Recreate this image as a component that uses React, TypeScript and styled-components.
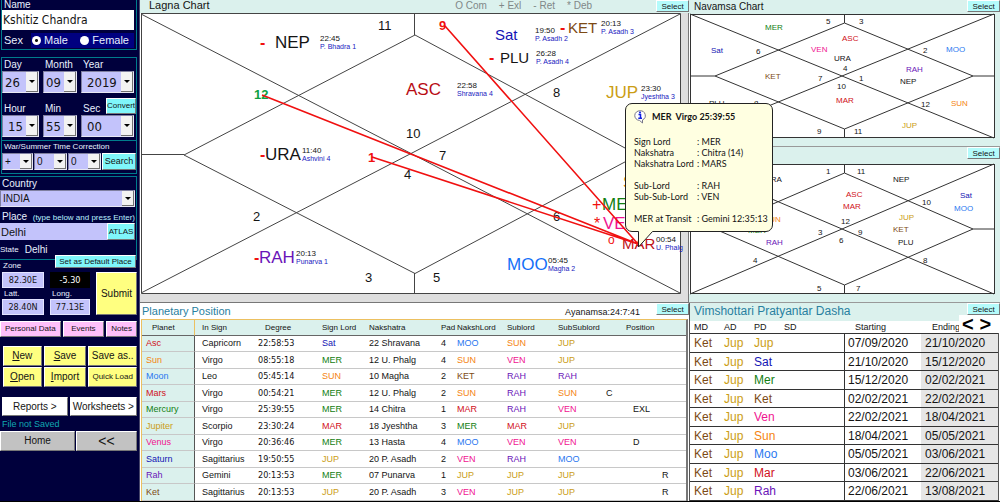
import React from "react";
import styled, { createGlobalStyle, css } from "styled-components";

const colors = {
  navy: "#00003c",
  teal: "#007c8c",
  mint: "#dbf1ed",
  lilac: "#c3c3fb",
  cyan: "#7ff6fa",
  black: "#141414",
  Sat: "#1414b4",
  Mer: "#128012",
  Sun: "#f58410",
  Moo: "#2a78f0",
  Mar: "#d01020",
  Jup: "#cb9d14",
  Ven: "#f01490",
  Rah: "#6a14b8",
  Ket: "#7d4a14",
};

const sans = `"Liberation Sans", Arial, sans-serif`;
const tahoma = `"DejaVu Sans Condensed", "DejaVu Sans", sans-serif`;

const planetColor = (name: string): string => {
  const key = name.slice(0, 1).toUpperCase() + name.slice(1, 3).toLowerCase();
  if (key === "Asc") return colors.Mar;
  return (colors as Record<string, string>)[key] ?? colors.black;
};

const GlobalStyle = createGlobalStyle`
  * { box-sizing: border-box; }
  body { margin: 0; background: #000; font-family: ${sans}; color: ${colors.black}; }
  button, input, select { font-family: inherit; color: inherit; margin: 0; border-radius: 0; }
`;

const Page = styled.div`
  display: grid;
  grid-template-columns: 140px minmax(0, 549fr) minmax(0, 311fr);
  border-bottom: 1px solid #000;
  overflow: hidden;
`;

/* ---------- sidebar ---------- */

const Sidebar = styled.aside`
  display: flex;
  flex-direction: column;
  padding-right: 2px;
  background: ${colors.navy};
  border-right: 1px solid #46466a;
  color: #e8f0ff;
`;

const Box = styled.section<{ $open?: boolean }>`
  display: flex;
  flex-direction: column;
  margin-left: 1px;
  border: 1px solid ${colors.teal};
  ${(p) => p.$open && css`border-left: 0; margin-left: 0;`}
`;

const NameBox = styled(Box)`
  border-top: 0;
  margin-bottom: 7px;
`;

const Label = styled.label<{ $size?: number; $height?: number }>`
  font-size: ${(p) => p.$size ?? 10}px;
  line-height: ${(p) => p.$height ?? 12}px;
  padding-left: 2px;
  white-space: nowrap;
`;

const NameInput = styled.input`
  height: 20px;
  margin-right: 2px;
  padding: 0 1px;
  border: 0;
  background: #fff;
  color: ${colors.black};
  font: 12px ${tahoma};
  min-width: 0;
`;

const SexRow = styled.div`
  display: flex;
  align-items: center;
  height: 16px;
  margin: 2px 2px 1px 2px;
  font-size: 11px;
`;

const RadioGroup = styled.div`
  display: flex;
  flex: 1;
  align-items: center;
  justify-content: space-between;
  margin-left: 8px;
  padding: 0 5px 0 1px;
  background: #000080;
`;

const RadioLabel = styled.label`
  display: flex;
  align-items: center;
  gap: 3px;
  line-height: 15px;
`;

const Radio = styled.input`
  appearance: none;
  width: 9px;
  height: 9px;
  border-radius: 50%;
  background: #fff;
  &:checked { background: radial-gradient(circle, #111 0 1px, #fff 2px); }
`;

const DateGrid = styled.div`
  display: grid;
  grid-template-columns: 37px 34px minmax(0, 1fr);
  column-gap: 4px;
  padding-right: 2px;
  align-items: end;
`;

const SecHead = styled.div`
  display: flex;
  justify-content: space-between;
  align-items: flex-end;
  height: 22px;
  margin-right: -2px;
`;

const Picker = styled.div<{ $height: number }>`
  display: grid;
  grid-template-columns: minmax(0, 1fr);
  height: ${(p) => p.$height}px;
`;

const Select = styled.select<{ $size: number; $indent: number }>`
  grid-area: 1 / 1;
  appearance: none;
  height: 100%;
  padding: 0 0 0 ${(p) => p.$indent}px;
  border: 1px solid #e8e8f4;
  border-top-color: #8080a0;
  border-left-color: #8080a0;
  background: ${colors.lilac};
  color: ${colors.black};
  font: ${(p) => p.$size}px ${(p) => (p.$size > 12 ? tahoma : sans)};
`;

const Arrow = styled.span`
  grid-area: 1 / 1;
  justify-self: end;
  align-self: center;
  display: grid;
  place-items: center;
  width: 12px;
  height: calc(100% - 2px);
  margin-right: 1px;
  background: #f2f2f2;
  border-right: 1px solid #707070;
  border-bottom: 1px solid #707070;
  pointer-events: none;
  &::after {
    content: "";
    border: 3px solid transparent;
    border-top-color: #000;
    border-bottom: 0;
  }
`;

const bevel = css`
  padding: 0;
  border: 1px solid #fff;
  border-right-color: #777;
  border-bottom-color: #777;
  color: ${colors.black};
  white-space: nowrap;
  cursor: pointer;
`;

type ButtonProps = { $bg?: string; $size?: number; $height?: number };

const Button = styled.button<ButtonProps>`
  ${bevel}
  min-width: 0;
  height: ${(p) => (p.$height ? `${p.$height}px` : "auto")};
  background: ${(p) => p.$bg ?? colors.cyan};
  font-size: ${(p) => p.$size ?? 9}px;
  line-height: 1;
`;

const ConvertButton = styled(Button)`
  width: 30px;
  margin-bottom: 1px;
`;

const Correction = styled.div`
  display: grid;
  grid-template-columns: 31px 33px 33px 34px;
  column-gap: 1px;
  padding-bottom: 3px;
`;

const Divider = styled.hr`
  width: 100%;
  margin: 3px 0 0;
  border: 0;
  border-top: 1px solid ${colors.teal};
`;

const PlaceBox = styled(Box)`
  margin-top: 2px;
  padding-right: 1px;
`;

const PlaceHead = styled.div`
  display: flex;
  align-items: center;
  justify-content: space-between;
  height: 16px;
  padding-top: 4px;
`;

const Hint = styled.span`
  color: #b8f0ff;
  font-size: 8px;
  white-space: nowrap;
`;

const PlaceRow = styled.div`
  display: grid;
  grid-template-columns: minmax(0, 1fr) 28px;
`;

const PlaceInput = styled.input`
  height: 17px;
  min-width: 0;
  padding: 0 1px;
  border: 0;
  background: ${colors.lilac};
  color: ${colors.black};
  font-size: 11px;
`;

const StateRow = styled.div`
  display: flex;
  align-items: center;
  gap: 6px;
  height: 19px;
  font-size: 8px;
  b { font-weight: normal; font-size: 10px; }
`;

const ZoneRow = styled.div`
  display: flex;
  justify-content: space-between;
  height: 12px;
  padding-left: 1px;
`;

const DefaultButton = styled(Button)`
  width: 81px;
  margin-top: -5px;
  margin-right: 1px;
  position: relative;
`;

const CoordGrid = styled.div`
  display: grid;
  grid-template-columns: 42px 40px minmax(0, 1fr);
  grid-template-rows: 16px 11px 16px;
  column-gap: 6px;
  padding-left: 2px;
`;

const CoordInput = styled.input<{ $dark?: boolean }>`
  min-width: 0;
  width: 100%;
  padding: 0;
  border: 1px solid ${(p) => (p.$dark ? "#000" : "#e4e4ff")};
  background: ${(p) => (p.$dark ? "#000" : colors.lilac)};
  color: ${(p) => (p.$dark ? "#fff" : colors.black)};
  font: 9px ${tahoma};
  text-align: center;
`;

const SubmitButton = styled(Button)`
  grid-column: 3;
  grid-row: 1 / 4;
`;

const ButtonGrid = styled.div<{ $cols: string; $top: number; $left?: number; $gap?: number }>`
  display: grid;
  grid-template-columns: ${(p) => p.$cols};
  gap: 1px ${(p) => p.$gap ?? 2}px;
  margin-top: ${(p) => p.$top}px;
  padding-left: ${(p) => p.$left ?? 0}px;
`;

const FileStatus = styled.p`
  margin: 3px 0 0;
  padding-left: 2px;
  color: #10a8b0;
  font-size: 9px;
  line-height: 11px;
`;

/* ---------- panels ---------- */

const Column = styled.main`
  display: flex;
  flex-direction: column;
  min-width: 0;
  background: #fff;
`;

const PanelHead = styled.header<{ $height: number; $plain?: boolean; $indent: number }>`
  display: flex;
  align-items: flex-start;
  justify-content: space-between;
  height: ${(p) => p.$height}px;
  padding-left: ${(p) => p.$indent}px;
  background: ${(p) => (p.$plain ? "#fff" : colors.mint)};
`;

const Title = styled.h2<{ $size: number; $height: number; $blue?: boolean }>`
  margin: 0;
  font-size: ${(p) => p.$size}px;
  line-height: ${(p) => p.$height}px;
  font-weight: normal;
  color: ${(p) => (p.$blue ? "#2880a0" : colors.black)};
  white-space: nowrap;
`;

const Legend = styled.div`
  display: flex;
  flex: 1;
  justify-content: flex-end;
  gap: 12px;
  margin-right: 64px;
  font-size: 10px;
  line-height: 11px;
  color: #808888;
`;

const SelectButton = styled.button<{ $width: number }>`
  ${bevel}
  width: ${(p) => p.$width}px;
  height: 12px;
  background: #b4fbfb;
  font-size: 8px;
  line-height: 9px;
`;

const LagnaBody = styled.div`
  position: relative;
  padding: 0 8px 8px 0;
  background: #dedede;
  border-right: 1px solid #777;
  border-bottom: 1px solid #777;
`;

const SmallBody = styled.div`
  padding: 0 5px 8px 0;
  background: ${colors.mint};
  border-bottom: 1px solid #999;
`;

const Chart = styled.svg`
  display: block;
  width: 100%;
  overflow: visible;
  background: #fff;
`;

const Ayanamsa = styled.p`
  flex: 1;
  margin: 0 16px 0 0;
  text-align: right;
  font-size: 9px;
  line-height: 19px;
`;

const Tip = styled.div`
  position: absolute;
  z-index: 2;
  left: 485px;
  top: 90px;
  width: 148px;
  height: 129px;
  padding: 4px 0 0 8px;
  border: 1px solid #222;
  border-radius: 7px;
  background: #ffffe1;
  font: 9px Lato, sans-serif;
  line-height: 11px;
  white-space: nowrap;
`;

const TipTitle = styled.div`
  display: flex;
  align-items: center;
  gap: 5px;
  height: 17px;
  margin-bottom: 11px;
  font-size: 9px;
  font-weight: bold;
  white-space: pre;
`;

const TipList = styled.dl`
  display: grid;
  grid-template-columns: 63px 1fr;
  margin: 0 0 11px;
  dd { margin: 0; }
`;

const TipPointer = styled.svg`
  position: absolute;
  left: 11px;
  top: 126px;
`;

/* ---------- tables ---------- */

const PlanetTable = styled.table`
  width: calc(100% - 3px);
  margin-left: 1px;
  table-layout: fixed;
  border-collapse: separate;
  border-spacing: 0;
  border-top: 1px solid #ecc060;
  border-left: 1px solid #ecc060;
  border-right: 2px solid #777;
  font-size: 9px;
  line-height: 13px;
  white-space: nowrap;
  th {
    height: 16px;
    padding: 0 0 0 7px;
    background: ${colors.mint};
    border-bottom: 1px solid #666;
    font-size: 8px;
    font-weight: normal;
    text-align: left;
  }
  td {
    padding: 0 0 0 7px;
    border-bottom: 1px solid #c8c8c8;
  }
  tbody tr { height: 16px; }
  tbody tr:nth-child(even) { height: 17px; }
  thead th:first-child {
    padding-left: 10px;
    border-right: 1px solid #ecc060;
  }
  thead th:nth-child(3) { padding-left: 14px; }
  thead th:nth-child(11) { padding-left: 0; }
  tbody th {
    height: auto;
    padding-left: 4px;
    font-size: 9px;
    border-bottom: 1px solid #c8c8c8;
    border-right: 1px solid #555;
  }
`;

const Tint = styled.span<{ $name: string }>`
  color: ${(p) => planetColor(p.$name)};
`;

const Degree = styled.td`
  font: 9px ${tahoma};
  line-height: 13px;
`;

const DashaPanel = styled.section`
  position: relative;
  border-left: 1px solid #555;
  flex: 1;
`;

const DashaTable = styled.table`
  width: calc(100% - 2px);
  table-layout: fixed;
  border-collapse: separate;
  border-spacing: 0;
  border-right: 1px solid #555;
  font-size: 12px;
  line-height: 16px;
  white-space: nowrap;
  th {
    height: 13px;
    padding: 0 0 0 4px;
    border-bottom: 1px solid #333;
    font-size: 9px;
    line-height: 12px;
    font-weight: normal;
    text-align: left;
  }
  th:nth-child(n + 5) { padding-left: 11px; }
  td {
    padding: 0 0 0 4px;
    border-bottom: 1px solid #333;
  }
  td:nth-child(5) { border-left: 1px solid #333; padding-left: 3px; }
  td:nth-child(6) { background: #e6e6e6; }
  tbody tr { height: 19px; }
  tbody tr:nth-child(even) { height: 18px; }
`;

const Pager = styled.nav`
  position: absolute;
  right: 0;
  top: 12px;
  display: flex;
  width: 41px;
  height: 18px;
  padding-right: 6px;
  background: #fff;
`;

const PageButton = styled.button`
  flex: 1;
  padding: 0;
  border: 0;
  background: transparent;
  font-size: 20px;
  font-weight: bold;
  line-height: 16px;
  color: #000;
`;

/* ---------- data ---------- */

type Mark = { x: number; y: number; text: string; color?: string; size?: number; bold?: boolean };

const RED = "#f01010";

const lagnaHouses: Mark[] = [
  { x: 378, y: 30, text: "11" },
  { x: 439, y: 30, text: "9", color: RED, bold: true },
  { x: 553, y: 97, text: "8" },
  { x: 406, y: 138, text: "10" },
  { x: 439, y: 160, text: "7" },
  { x: 254, y: 99, text: "12", color: "#10a040", bold: true },
  { x: 368, y: 162, text: "1", color: RED, bold: true },
  { x: 404, y: 179, text: "4" },
  { x: 253, y: 221, text: "2" },
  { x: 365, y: 282, text: "3" },
  { x: 433, y: 282, text: "5" },
  { x: 553, y: 221, text: "6" },
];

type Body = {
  x: number; y: number; text: string; size: number; color?: string;
  deg?: string; star?: string; dx?: number; flag?: string; fx?: number;
};

const lagnaBodies: Body[] = [
  { x: 275, y: 48, text: "NEP", size: 17, deg: "22:45", star: "P. Bhadra 1", dx: 320, flag: "-", fx: 260 },
  { x: 406, y: 95, text: "ASC", size: 17, color: "#b80c14", deg: "22:58", star: "Shravana 4", dx: 457 },
  { x: 495, y: 40, text: "Sat", size: 15, color: colors.Sat, deg: "19:50", star: "P. Asadh 2", dx: 535 },
  { x: 568, y: 33, text: "KET", size: 15, color: colors.Ket, deg: "20:13", star: "P. Asadh 3", dx: 601, flag: "-", fx: 560 },
  { x: 500, y: 63, text: "PLU", size: 15, deg: "26:28", star: "P. Asadh 4", dx: 536, flag: "-", fx: 489 },
  { x: 606, y: 98, text: "JUP", size: 17, color: colors.Jup, deg: "23:30", star: "Jyeshtha 3", dx: 641 },
  { x: 265, y: 160, text: "URA", size: 17, deg: "11:40", star: "Ashvini 4", dx: 302, flag: "-", fx: 260 },
  { x: 259, y: 263, text: "RAH", size: 17, color: colors.Rah, deg: "20:13", star: "Punarva 1", dx: 296, flag: "-", fx: 254 },
  { x: 507, y: 270, text: "MOO", size: 17, color: "#1470f8", deg: "05:45", star: "Magha 2", dx: 548 },
  { x: 622, y: 249, text: "MAR", size: 15, color: "#c01018", deg: "00:54", star: "U. Phalg", dx: 656, flag: "o", fx: 608 },
  { x: 602, y: 210, text: "MER", size: 17, color: colors.Mer, flag: "+", fx: 592 },
  { x: 603, y: 229, text: "VEN", size: 17, color: colors.Ven, flag: "*", fx: 594 },
  { x: 623, y: 188, text: "SUN", size: 17, color: colors.Sun },
];

const navamsaMarks: Mark[] = [
  { x: 826, y: 24, text: "5" }, { x: 859, y: 24, text: "3" }, { x: 756, y: 54, text: "6" },
  { x: 923, y: 53, text: "2" }, { x: 843, y: 71, text: "4" }, { x: 818, y: 81, text: "7" },
  { x: 859, y: 81, text: "1" }, { x: 837, y: 89, text: "10" }, { x: 921, y: 107, text: "12" },
  { x: 754, y: 106, text: "8" }, { x: 817, y: 134, text: "9" }, { x: 854, y: 134, text: "11" },
  { x: 765, y: 30, text: "MER" }, { x: 842, y: 41, text: "ASC" }, { x: 811, y: 52, text: "VEN" },
  { x: 711, y: 53, text: "Sat" }, { x: 946, y: 52, text: "MOO" }, { x: 834, y: 61, text: "URA" },
  { x: 906, y: 72, text: "RAH" }, { x: 765, y: 79, text: "KET" }, { x: 900, y: 84, text: "NEP" },
  { x: 836, y: 103, text: "MAR" }, { x: 951, y: 106, text: "SUN" }, { x: 709, y: 106, text: "PLU" },
  { x: 902, y: 128, text: "JUP" },
];

const transitMarks: Mark[] = [
  { x: 826, y: 174, text: "1" }, { x: 857, y: 174, text: "11" }, { x: 922, y: 205, text: "10" },
  { x: 841, y: 224, text: "12" }, { x: 818, y: 235, text: "3" }, { x: 858, y: 235, text: "9" },
  { x: 839, y: 243, text: "6" }, { x: 753, y: 263, text: "4" }, { x: 923, y: 263, text: "8" },
  { x: 817, y: 291, text: "5" }, { x: 856, y: 291, text: "7" },
  { x: 765, y: 182, text: "URA" }, { x: 893, y: 182, text: "NEP" }, { x: 846, y: 197, text: "ASC" },
  { x: 843, y: 209, text: "MAR" }, { x: 960, y: 198, text: "Sat" }, { x: 954, y: 211, text: "MOO" },
  { x: 899, y: 220, text: "JUP" }, { x: 893, y: 232, text: "KET" }, { x: 898, y: 245, text: "PLU" },
  { x: 764, y: 222, text: "SUN" }, { x: 748, y: 233, text: "MER" }, { x: 766, y: 245, text: "RAH" },
];

const planetCols = [53, 56, 64, 47, 72, 16, 50, 51, 48, 27, 29, 31];

const planetRows: string[][] = [
  ["Asc", "Capricorn", "22:58:53", "Sat", "22 Shravana", "4", "MOO", "SUN", "JUP", "", "", ""],
  ["Sun", "Virgo", "08:55:18", "MER", "12 U. Phalg", "4", "SUN", "VEN", "JUP", "", "", ""],
  ["Moon", "Leo", "05:45:14", "SUN", "10 Magha", "2", "KET", "RAH", "RAH", "", "", ""],
  ["Mars", "Virgo", "00:54:21", "MER", "12 U. Phalg", "2", "SUN", "RAH", "SUN", "C", "", ""],
  ["Mercury", "Virgo", "25:39:55", "MER", "14 Chitra", "1", "MAR", "RAH", "VEN", "", "EXL", ""],
  ["Jupiter", "Scorpio", "23:30:24", "MAR", "18 Jyeshtha", "3", "MER", "MAR", "JUP", "", "", ""],
  ["Venus", "Virgo", "20:36:46", "MER", "13 Hasta", "4", "MOO", "VEN", "VEN", "", "D", ""],
  ["Saturn", "Sagittarius", "19:50:55", "JUP", "20 P. Asadh", "2", "VEN", "RAH", "MOO", "", "", ""],
  ["Rah", "Gemini", "20:13:53", "MER", "07 Punarva", "1", "JUP", "JUP", "JUP", "", "", "R"],
  ["Ket", "Sagittarius", "20:13:53", "JUP", "20 P. Asadh", "3", "VEN", "JUP", "JUP", "", "", "R"],
];

const dashaCols = [30, 30, 30, 64, 77, 77];

const dashaRows: string[][] = [
  ["Jup", "07/09/2020", "21/10/2020"],
  ["Sat", "21/10/2020", "15/12/2020"],
  ["Mer", "15/12/2020", "02/02/2021"],
  ["Ket", "02/02/2021", "22/02/2021"],
  ["Ven", "22/02/2021", "18/04/2021"],
  ["Sun", "18/04/2021", "05/05/2021"],
  ["Moo", "05/05/2021", "03/06/2021"],
  ["Mar", "03/06/2021", "22/06/2021"],
  ["Rah", "22/06/2021", "13/08/2021"],
];

/* ---------- components ---------- */

type DropDownProps = { id: string; value: string; label?: string; height?: number; size?: number; indent?: number };

const DropDown = ({ id, value, label, height = 22, size = 13, indent = 2 }: DropDownProps) => (
  <Picker $height={height}>
    <Select id={id} aria-label={label} defaultValue={value} $size={size} $indent={indent}>
      <option>{value}</option>
    </Select>
    <Arrow />
  </Picker>
);

const LagnaChart = () => (
  <Chart viewBox="140 13 540 281" fontFamily={sans} role="img" aria-label="Lagna chart">
    <g fill="none" stroke="#444" strokeWidth="1">
      <path d="M141 13.5H680.5V293.5H141.5V13.5" />
      <path d="M141 14L412 154L680 293M680 14L412 153L141 293" />
      <path d="M184 155L415 35L638 155L415 273.5Z" />
      <path d="M141 154.5H184M638 154.5H680M414.5 14V35M414.5 273V294" />
    </g>
    {lagnaHouses.map((h) => (
      <text key={h.text} x={h.x} y={h.y} fontSize={13} fontWeight={h.bold ? 700 : 400} fill={h.color ?? colors.black}>
        {h.text}
      </text>
    ))}
    {lagnaBodies.map((b) => (
      <g key={b.text}>
        {b.flag && (
          <text x={b.fx} y={b.flag === "o" ? b.y - 5 : b.y} fontSize={b.flag === "o" ? 12 : 16} fill={RED} fontWeight={b.flag === "-" ? 700 : 400}>
            {b.flag}
          </text>
        )}
        <text x={b.x} y={b.y} fontSize={b.size} fill={b.color ?? colors.black}>{b.text}</text>
        {b.deg && <text x={b.dx} y={b.y - 7} fontSize={8} fill={colors.black}>{b.deg}</text>}
        {b.star && <text x={b.dx} y={b.y + 1} fontSize={7} fill="#1818c0">{b.star}</text>}
      </g>
    ))}
    <path d="M445 26L638 244M262 95L638 244M372 157L638 244" fill="none" stroke={RED} strokeWidth="1.6" />
  </Chart>
);

type SmallChartProps = { top: number; height: number; marks: Mark[]; label: string };

const SmallChart = ({ top, height, marks, label }: SmallChartProps) => {
  const bottom = top + height;
  const mid = top + height / 2;
  return (
    <Chart viewBox={`689 ${top} 306 ${height}`} fontFamily={sans} role="img" aria-label={label}>
      <g fill="none" stroke="#333" strokeWidth="1">
        <rect x="690.5" y={top + 0.5} width="304" height={height - 1} />
        <path d={`M690 ${top}L842 ${mid}L994 ${bottom}M994 ${top}L842 ${mid}L690 ${bottom}`} />
        <path d={`M715 ${mid}L844.5 ${top + 9}L973 ${mid}L844.5 ${bottom - 9}Z`} />
        <path d={`M690 ${mid}H715M973 ${mid}H994M844.5 ${top}V${top + 9}M844.5 ${bottom - 9}V${bottom}`} />
      </g>
      {marks.map((m) => (
        <text key={m.text} x={m.x} y={m.y} fontSize={8} fill={planetColor(m.text)}>{m.text}</text>
      ))}
    </Chart>
  );
};

const Tooltip = () => (
  <Tip role="tooltip">
    <TipTitle>
      <svg width="13" height="14" viewBox="0 0 13 14" aria-hidden="true">
        <path d="M6 .8A5 4.8 0 1 0 5.500 10.400L8.500 13V9.900A5 4.800 0 0 0 6 .8Z" fill="#fff" stroke="#778" />
        <path d="M4.500 4.500H6.500V8M4.300 8.300H8" fill="none" stroke="#1020e0" strokeWidth="1.500" />
        <circle cx="6" cy="2.600" r="1" fill="#1020e0" />
      </svg>
      {"MER  Virgo 25:39:55"}
    </TipTitle>
    <TipList>
      <dt>Sign Lord</dt><dd>: MER</dd>
      <dt>Nakshatra</dt><dd>: Chitra (14)</dd>
      <dt>Nakshatra Lord</dt><dd>: MARS</dd>
    </TipList>
    <TipList>
      <dt>Sub-Lord</dt><dd>: RAH</dd>
      <dt>Sub-Sub-Lord</dt><dd>: VEN</dd>
    </TipList>
    <TipList>
      <dt>MER at Transit</dt><dd>: Gemini 12:35:13</dd>
    </TipList>
    <TipPointer width="18" height="19" viewBox="0 0 18 19" aria-hidden="true">
      <path d="M1.500 0V17L15.500 1.500V0Z" fill="#ffffe1" />
      <path d="M1.500 1.500V17L15.500 1.500" fill="none" stroke="#222" />
    </TipPointer>
  </Tip>
);

const BirthForm = () => (
  <Sidebar>
    <NameBox>
      <Label htmlFor="name" $height={10}>Name</Label>
      <NameInput id="name" defaultValue="Kshitiz Chandra" />
      <SexRow>
        <span>Sex</span>
        <RadioGroup role="radiogroup" aria-label="Sex">
          <RadioLabel><Radio type="radio" name="sex" defaultChecked />Male</RadioLabel>
          <RadioLabel><Radio type="radio" name="sex" />Female</RadioLabel>
        </RadioGroup>
      </SexRow>
    </NameBox>

    <Box>
      <DateGrid>
        <Label htmlFor="day" $height={13}>Day</Label>
        <Label htmlFor="month" $height={13}>Month</Label>
        <Label htmlFor="year" $height={13}>Year</Label>
        <DropDown id="day" value="26" />
        <DropDown id="month" value="09" />
        <DropDown id="year" value="2019" indent={5} />
        <Label htmlFor="hour">Hour</Label>
        <Label htmlFor="min">Min</Label>
        <SecHead>
          <Label htmlFor="sec">Sec</Label>
          <ConvertButton $size={8} $height={16}>Convert</ConvertButton>
        </SecHead>
        <DropDown id="hour" value="15" indent={5} />
        <DropDown id="min" value="55" />
        <DropDown id="sec" value="00" indent={5} />
      </DateGrid>
      <Divider />
      <Label as="div" $size={8}>War/Summer Time Correction</Label>
      <Correction>
        <DropDown id="sign" label="Correction sign" value="+" height={17} size={10} />
        <DropDown id="chours" label="Correction hours" value="0" height={17} size={10} />
        <DropDown id="cmins" label="Correction minutes" value="0" height={17} size={10} />
        <Button $size={9} $height={17}>Search</Button>
      </Correction>
    </Box>

    <PlaceBox $open>
      <Label htmlFor="country" $height={13}>Country</Label>
      <DropDown id="country" value="INDIA" height={17} size={10} />
      <PlaceHead>
        <Label htmlFor="place">Place</Label>
        <Hint>(type below and press Enter)</Hint>
      </PlaceHead>
      <PlaceRow>
        <PlaceInput id="place" defaultValue="Delhi" />
        <Button $size={8} $height={17}>ATLAS</Button>
      </PlaceRow>
      <StateRow>State <b>Delhi</b></StateRow>
    </PlaceBox>

    <ZoneRow>
      <Label htmlFor="zone" $size={8}>Zone</Label>
      <DefaultButton $size={8} $height={13}>Set as Default Place</DefaultButton>
    </ZoneRow>
    <CoordGrid>
      <CoordInput id="zone" defaultValue="82.30E" />
      <CoordInput aria-label="Offset" defaultValue="-5.30" $dark />
      <SubmitButton $bg="#ffff80" $size={10}>Submit</SubmitButton>
      <Label htmlFor="latt" $size={8} $height={11}>Latt.</Label>
      <Label htmlFor="long" $size={8} $height={11}>Long.</Label>
      <CoordInput id="latt" defaultValue="28.40N" />
      <CoordInput id="long" defaultValue="77.13E" />
    </CoordGrid>

    <ButtonGrid $cols="61fr 42fr 31fr" $top={6}>
      <Button $bg="#ffc0fa" $size={8} $height={16}>Personal Data</Button>
      <Button $bg="#ffc0fa" $size={8} $height={16}>Events</Button>
      <Button $bg="#ffc0fa" $size={8} $height={16}>Notes</Button>
    </ButtonGrid>
    <ButtonGrid $cols="39fr 43fr 49fr" $top={9} $left={3}>
      <Button $bg="#ffff80" $size={10} $height={20}><u>N</u>ew</Button>
      <Button $bg="#ffff80" $size={10} $height={20}><u>S</u>ave</Button>
      <Button $bg="#ffff80" $size={10} $height={20}>Save as..</Button>
      <Button $bg="#ffff80" $size={10} $height={20}><u>O</u>pen</Button>
      <Button $bg="#ffff80" $size={10} $height={20}><u>I</u>mport</Button>
      <Button $bg="#ffff80" $size={8} $height={20}>Quick Load</Button>
    </ButtonGrid>
    <ButtonGrid $cols="66fr 68fr" $top={10} $left={2}>
      <Button $bg="#fff" $size={10} $height={19}>Reports &gt;</Button>
      <Button $bg="#fff" $size={10} $height={19}>Worksheets &gt;</Button>
    </ButtonGrid>
    <FileStatus>File not Saved</FileStatus>
    <ButtonGrid $cols="75fr 61fr" $top={1} $gap={1}>
      <Button $bg="#c2c2c2" $size={10} $height={20}>Home</Button>
      <Button $bg="#c2c2c2" $size={14} $height={20}>&lt;&lt;</Button>
    </ButtonGrid>
  </Sidebar>
);

const PlanetaryPosition = () => (
  <section>
    <PanelHead $height={16} $indent={2} $plain>
      <Title $size={11} $height={16} $blue>Planetary Position</Title>
      <Ayanamsa>Ayanamsa:24:7:41</Ayanamsa>
      <SelectButton $width={33}>Select</SelectButton>
    </PanelHead>
    <PlanetTable>
      <colgroup>{planetCols.map((w, i) => <col key={i} width={w} />)}</colgroup>
      <thead>
        <tr>
          <th>Planet</th><th>In Sign</th><th>Degree</th><th>Sign Lord</th><th>Nakshatra</th><th>Pad</th>
          <th>NakshLord</th><th>Sublord</th><th>SubSublord</th><th /><th>Position</th><th />
        </tr>
      </thead>
      <tbody>
        {planetRows.map((row) => (
          <tr key={row[0]}>
            <th scope="row"><Tint $name={row[0]}>{row[0]}</Tint></th>
            <td>{row[1]}</td>
            <Degree>{row[2]}</Degree>
            {row.slice(3).map((cell, i) => (
              <td key={i}><Tint $name={cell}>{cell}</Tint></td>
            ))}
          </tr>
        ))}
      </tbody>
    </PlanetTable>
  </section>
);

const Dasha = () => (
  <DashaPanel>
    <PanelHead $height={18} $indent={4}>
      <Title $size={12} $height={17} $blue>Vimshottari Pratyantar Dasha</Title>
      <SelectButton $width={33}>Select</SelectButton>
    </PanelHead>
    <DashaTable>
      <colgroup>{dashaCols.map((w, i) => <col key={i} width={w} />)}</colgroup>
      <thead>
        <tr><th>MD</th><th>AD</th><th>PD</th><th>SD</th><th>Starting</th><th>Ending</th></tr>
      </thead>
      <tbody>
        {dashaRows.map(([pd, start, end]) => (
          <tr key={pd}>
            <td><Tint $name="Ket">Ket</Tint></td>
            <td><Tint $name="Jup">Jup</Tint></td>
            <td><Tint $name={pd}>{pd}</Tint></td>
            <td />
            <td>{start}</td>
            <td>{end}</td>
          </tr>
        ))}
      </tbody>
    </DashaTable>
    <Pager aria-label="Dasha pages">
      <PageButton aria-label="Previous">&lt;</PageButton>
      <PageButton aria-label="Next">&gt;</PageButton>
    </Pager>
  </DashaPanel>
);

export default function App() {
  return (
    <>
      <GlobalStyle />
      <Page>
        <BirthForm />
        <Column>
          <PanelHead $height={13} $indent={9}>
            <Title $size={11} $height={10}>Lagna Chart</Title>
            <Legend><span>O Com</span><span>+ Exl</span><span>- Ret</span><span>* Deb</span></Legend>
            <SelectButton $width={33}>Select</SelectButton>
          </PanelHead>
          <LagnaBody>
            <LagnaChart />
            <Tooltip />
          </LagnaBody>
          <PlanetaryPosition />
        </Column>
        <Column as="div">
          <PanelHead $height={14} $indent={5}>
            <Title $size={10} $height={14}>Navamsa Chart</Title>
            <SelectButton $width={33}>Select</SelectButton>
          </PanelHead>
          <SmallBody>
            <SmallChart top={14} height={124} marks={navamsaMarks} label="Navamsa chart" />
          </SmallBody>
          <PanelHead $height={17} $indent={5}>
            <span />
            <SelectButton $width={33}>Select</SelectButton>
          </PanelHead>
          <SmallBody>
            <SmallChart top={164} height={130} marks={transitMarks} label="Transit chart" />
          </SmallBody>
          <Dasha />
        </Column>
      </Page>
    </>
  );
}
